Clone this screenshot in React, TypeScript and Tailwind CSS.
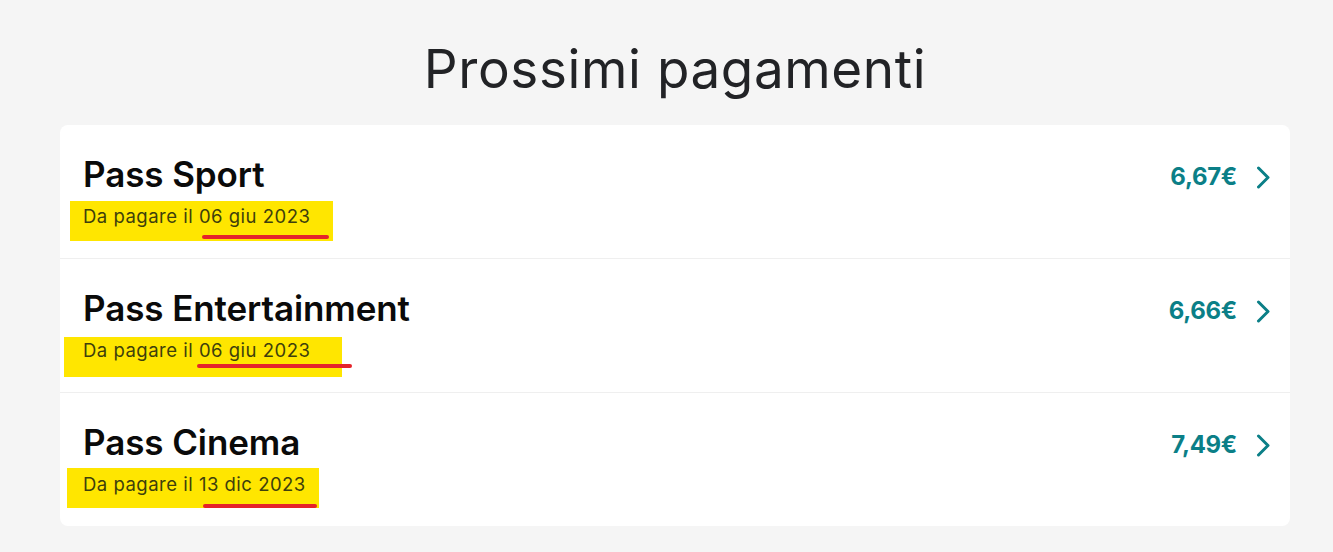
const PAYMENTS = [
  {
    name: "Pass Sport",
    date: "06 giu 2023",
    amount: "6,67€",
    mark: "left-[-13px] top-[-3px] w-[263px] h-[40px]",
    line: "left-[119px] top-[31px] w-[127px]",
  },
  {
    name: "Pass Entertainment",
    date: "06 giu 2023",
    amount: "6,66€",
    mark: "left-[-19px] top-[-1px] w-[278px] h-[40px]",
    line: "left-[114px] top-[26px] w-[155px]",
  },
  {
    name: "Pass Cinema",
    date: "13 dic 2023",
    amount: "7,49€",
    mark: "left-[-16px] top-[-4px] w-[252px] h-[40px]",
    line: "left-[120px] top-[32px] w-[114px]",
  },
];

// freccia a destra dell'importo
function Chevron() {
  return (
    <svg width="15" height="23" viewBox="0 0 15 23" fill="none" className="shrink-0">
      <path d="M2.5 2 L12 11.5 L2.5 21" stroke="#0b7f87" strokeWidth="3" strokeLinecap="round" strokeLinejoin="round" />
    </svg>
  );
}

export default function App() {
  return (
    <div className="min-h-screen bg-[#f5f5f5] pt-[36px] pb-[20px] pl-[60px] pr-[43px] font-['Inter','Noto_Sans',sans-serif]">
      <h1 className="text-center text-[53px] leading-[66px] font-normal text-[#222326] tracking-[0.6px]">
        Prossimi pagamenti
      </h1>

      <div className="mt-[23px] bg-white rounded-lg overflow-hidden">
        {PAYMENTS.map((p, i) => (
          <div
            key={p.name}
            className={`flex items-start justify-between pl-[23px] pr-[19px] pt-[29px] ${i > 0 ? "h-[134px] border-t border-[#efefef]" : "h-[133px]"}`}
          >
            <div>
              <div className="text-[35px] leading-[40px] font-semibold text-[#0a0a0a] tracking-[-0.1px]">{p.name}</div>
              <div className="relative mt-[10px] h-[24px]">
                <span className={`absolute bg-[#ffe600] ${p.mark}`} />
                <span className={`absolute h-[4px] rounded-full bg-[#e5232a] ${p.line}`} />
                <span className="relative text-[18.5px] leading-[24px] text-[#3e3f0c] tracking-[0.5px]">
                  Da pagare il {p.date}
                </span>
              </div>
            </div>
            <div className="flex items-center gap-[19px] mt-[8px]">
              <span className="text-[24px] leading-[30px] font-bold text-[#0b7f87] tracking-[-0.3px]">{p.amount}</span>
              <Chevron />
            </div>
          </div>
        ))}
      </div>
    </div>
  );
}
